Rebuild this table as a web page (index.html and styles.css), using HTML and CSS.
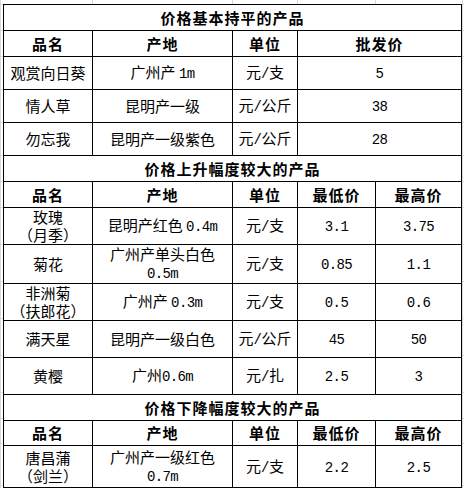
FILE: index.html
```html
<!DOCTYPE html>
<html lang="zh-CN">
<head>
<meta charset="utf-8">
<title>花卉价格</title>
<link rel="stylesheet" href="styles.css">
</head>
<body>
<div class="sheet">
<table class="price">
<colgroup><col class="c1"><col class="c2"><col class="c3"><col class="c4"><col class="c5"></colgroup>
<tbody>
<tr class="r-title"><th class="title" colspan="5">价格基本持平的产品</th></tr>
<tr class="r-head"><th>品名</th><th>产地</th><th>单位</th><th colspan="2">批发价</th></tr>
<tr class="r-a"><td>观赏向日葵</td><td>广州产 <span class="n">1m</span></td><td>元<span class="n">/</span>支</td><td colspan="2"><span class="n">5</span></td></tr>
<tr class="r-a"><td>情人草</td><td>昆明产一级</td><td>元<span class="n">/</span>公斤</td><td colspan="2"><span class="n">38</span></td></tr>
<tr class="r-a"><td>勿忘我</td><td>昆明产一级紫色</td><td>元<span class="n">/</span>公斤</td><td colspan="2"><span class="n">28</span></td></tr>

<tr class="r-title"><th class="title" colspan="5">价格上升幅度较大的产品</th></tr>
<tr class="r-head"><th>品名</th><th>产地</th><th>单位</th><th>最低价</th><th>最高价</th></tr>
<tr class="r-b"><td>玫瑰<br>（月季）</td><td>昆明产红色 <span class="n">0.4m</span></td><td>元<span class="n">/</span>支</td><td><span class="n">3.1</span></td><td><span class="n">3.75</span></td></tr>
<tr class="r-b"><td>菊花</td><td>广州产单头白色<br><span class="n">0.5m</span></td><td>元<span class="n">/</span>支</td><td><span class="n">0.85</span></td><td><span class="n">1.1</span></td></tr>
<tr class="r-b"><td>非洲菊<br>（扶郎花）</td><td>广州产 <span class="n">0.3m</span></td><td>元<span class="n">/</span>支</td><td><span class="n">0.5</span></td><td><span class="n">0.6</span></td></tr>
<tr class="r-b"><td>满天星</td><td>昆明产一级白色</td><td>元<span class="n">/</span>公斤</td><td><span class="n">45</span></td><td><span class="n">50</span></td></tr>
<tr class="r-b"><td>黄樱</td><td>广州<span class="n">0.6m</span></td><td>元<span class="n">/</span>扎</td><td><span class="n">2.5</span></td><td><span class="n">3</span></td></tr>

<tr class="r-title"><th class="title" colspan="5">价格下降幅度较大的产品</th></tr>
<tr class="r-head2"><th>品名</th><th>产地</th><th>单位</th><th>最低价</th><th>最高价</th></tr>
<tr class="r-c"><td>唐昌蒲<br>（剑兰）</td><td>广州产一级红色<br><span class="n">0.7m</span></td><td>元<span class="n">/</span>支</td><td><span class="n">2.2</span></td><td><span class="n">2.5</span></td></tr>
</tbody>
</table>
</div>
</body>
</html>
```

FILE: styles.css
```css
html, body {
  margin: 0;
  padding: 0;
  background: #fff;
}

.sheet {
  width: 464px;
  height: 488px;
  box-sizing: border-box;
  padding: 4px 0 0 3px;
  background-color: #fff;
  background-image:
    linear-gradient(#dadada, #dadada),
    linear-gradient(#dadada, #dadada),
    linear-gradient(#dadada, #dadada),
    linear-gradient(#dadada, #dadada),
    linear-gradient(#dadada, #dadada),
    linear-gradient(#dadada, #dadada),
    linear-gradient(#dadada, #dadada),
    linear-gradient(#dadada, #dadada),
    linear-gradient(#dadada, #dadada),
    linear-gradient(#dadada, #dadada),
    linear-gradient(#dadada, #dadada),
    linear-gradient(#dadada, #dadada),
    linear-gradient(#dadada, #dadada),
    linear-gradient(#dadada, #dadada),
    linear-gradient(#dadada, #dadada),
    linear-gradient(#dadada, #dadada),
    linear-gradient(#dadada, #dadada),
    linear-gradient(#dadada, #dadada),
    linear-gradient(#dadada, #dadada),
    linear-gradient(#dadada, #dadada),
    linear-gradient(#dadada, #dadada),
    linear-gradient(#dadada, #dadada);
  background-repeat: no-repeat;
  background-size:
    1px 100%, 1px 100%, 1px 100%, 1px 100%, 1px 100%, 1px 100%,
    100% 1px, 100% 1px, 100% 1px, 100% 1px, 100% 1px, 100% 1px, 100% 1px, 100% 1px,
    100% 1px, 100% 1px, 100% 1px, 100% 1px, 100% 1px, 100% 1px, 100% 1px, 100% 1px;
  background-position:
    0 0, 92px 0, 232px 0, 297px 0, 375px 0, 462px 0,
    0 30px, 0 56px, 0 89px, 0 122px, 0 155px, 0 181px, 0 207px, 0 244px,
    0 281px, 0 318px, 0 355px, 0 392px, 0 418px, 0 443px, 0 485px, 0 4px;
}

.price {
  border-collapse: collapse;
  table-layout: fixed;
  width: 458px;
  font-family: "Noto Sans CJK SC", "Noto Sans", sans-serif;
  font-size: 15px;
  color: #000;
}

.c1 { width: 89px; }
.c2 { width: 140px; }
.c3 { width: 65px; }
.c4 { width: 78px; }
.c5 { width: 86px; }

.price th,
.price td {
  border: 1px solid #000;
  padding: 0;
  text-align: center;
  vertical-align: middle;
  line-height: 18px;
  background: #fff;
  white-space: nowrap;
}

.price td {
  font-weight: 400;
}

.price th {
  font-weight: 700;
  letter-spacing: 1px;
}

.r-title { height: 26px; }
.r-head { height: 26px; }
.r-head2 { height: 25px; }
.r-a { height: 33px; }
.r-b { height: 37px; }
.r-c { height: 42px; }

.n {
  font-family: "Liberation Mono", "DejaVu Sans Mono", monospace;
  font-size: 14px;
  letter-spacing: -0.6px;
}
```
